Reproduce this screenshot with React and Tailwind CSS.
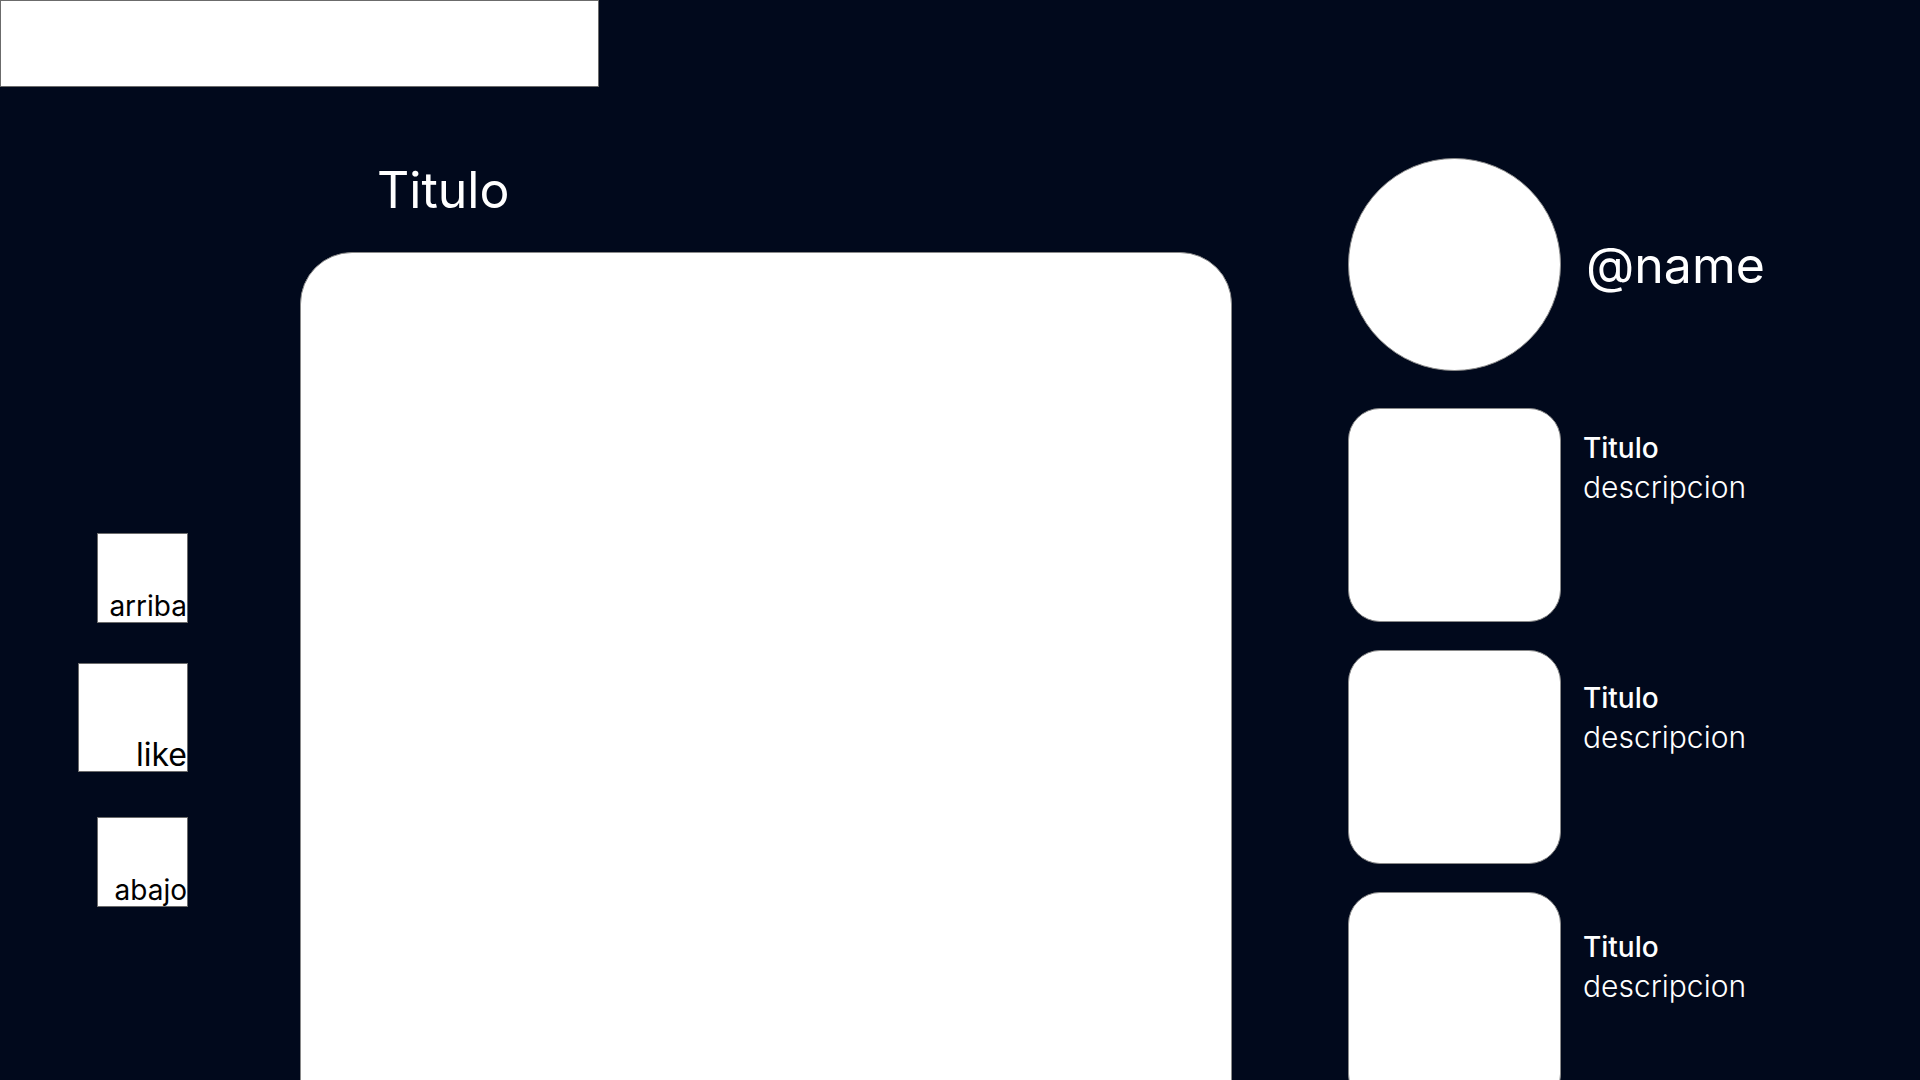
const videos = [
  { id: 1, offset: 'mt-[21px]' },
  { id: 2, offset: 'mt-[29px]' },
  { id: 3, offset: 'mt-[36px]' },
]

function SideButton({ label, size }) {
  return (
    <button
      className={`${size} flex items-end justify-end bg-white border border-[#6b6b6b] text-black cursor-pointer p-0`}
    >
      {label}
    </button>
  )
}

export default function App() {
  return (
    <div
      className="w-[1920px] h-[1080px] overflow-hidden bg-[#01091c] text-white"
      style={{ fontFamily: 'Inter, "Noto Sans", sans-serif' }}
    >
      {/* top bar placeholder */}
      <div className="w-[599px] h-[87px] bg-white border border-[#6b6b6b]" />

      <div className="flex">
        {/* side actions */}
        <div className="w-[300px] flex flex-col items-end pr-[112px] pt-[446px]">
          <SideButton label="arriba" size="w-[91px] h-[90px] text-[28px] leading-[32px]" />
          <div className="mt-[40px]">
            <SideButton label="like" size="w-[110px] h-[109px] text-[32px] leading-[32px]" />
          </div>
          <div className="mt-[45px]">
            <SideButton label="abajo" size="w-[91px] h-[90px] text-[28px] leading-[32px]" />
          </div>
        </div>

        {/* main video */}
        <div className="w-[932px] flex flex-col">
          <h1 className="ml-[77px] mt-[78px] text-[50px] leading-none font-normal">Titulo</h1>
          <div className="mt-[37px] w-[932px] h-[900px] bg-white rounded-[52px] border border-[#8a8a8a]" />
        </div>

        {/* profile + list */}
        <div className="ml-[116px] flex flex-col pt-[71px]">
          <div className="flex items-center gap-[25px]">
            <div className="w-[213px] h-[213px] rounded-full bg-white border border-[#8a8a8a]" />
            <span className="text-[50px] leading-none">@name</span>
          </div>

          <div className="mt-[37px] flex flex-col gap-[28px]">
            {videos.map((v) => (
              <div key={v.id} className="flex gap-[22px]">
                <div className="w-[213px] h-[214px] rounded-[32px] bg-white border border-[#8a8a8a] shrink-0" />
                <div className={`${v.offset} flex flex-col leading-[39px]`}>
                  <span className="text-[28px] font-medium">Titulo</span>
                  <span className="text-[30px] font-light">descripcion</span>
                </div>
              </div>
            ))}
          </div>
        </div>
      </div>
    </div>
  )
}
